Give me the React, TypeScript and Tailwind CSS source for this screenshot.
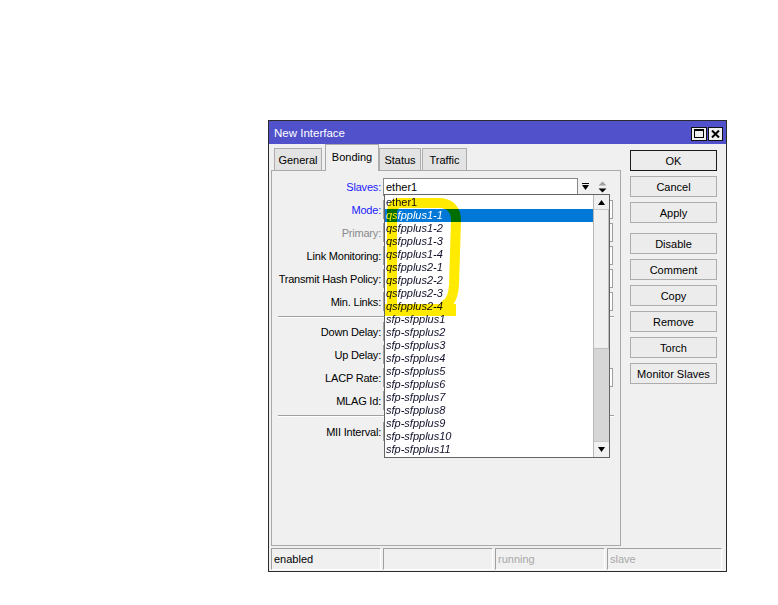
const tabs = [
  { name: "General", w: "w-[48px] ml-[3px]" },
  { name: "Bonding", w: "w-[54px] ml-[3px]", active: true },
  { name: "Status", w: "w-[42px]" },
  { name: "Traffic", w: "w-[45px] ml-[1px]" },
];

const slaves = [
  "ether1",
  "qsfpplus1-1",
  "qsfpplus1-2",
  "qsfpplus1-3",
  "qsfpplus1-4",
  "qsfpplus2-1",
  "qsfpplus2-2",
  "qsfpplus2-3",
  "qsfpplus2-4",
  "sfp-sfpplus1",
  "sfp-sfpplus2",
  "sfp-sfpplus3",
  "sfp-sfpplus4",
  "sfp-sfpplus5",
  "sfp-sfpplus6",
  "sfp-sfpplus7",
  "sfp-sfpplus8",
  "sfp-sfpplus9",
  "sfp-sfpplus10",
  "sfp-sfpplus11",
];

const actions = ["OK", "Cancel", "Apply", "Disable", "Comment", "Copy", "Remove", "Torch", "Monitor Slaves"];

type Row = { label: string; color?: string; field: string };

const topRows: Row[] = [
  { label: "Mode:", color: "text-[#1c1cff]", field: "w-[230px] bg-white" },
  { label: "Primary:", color: "text-[#8a8a8a]", field: "w-[230px] bg-[#f7f7f7]" },
  { label: "Link Monitoring:", field: "w-[230px] bg-white" },
  { label: "Transmit Hash Policy:", field: "w-[230px] bg-white" },
  { label: "Min. Links:", field: "w-[230px] bg-white" },
];

const delayRows: Row[] = [
  { label: "Down Delay:", field: "w-[180px] bg-white" },
  { label: "Up Delay:", field: "w-[180px] bg-white" },
  { label: "LACP Rate:", field: "w-[230px] bg-white" },
  { label: "MLAG Id:", field: "w-[180px] bg-white" },
];

function FormRow({ row }: { row: Row }) {
  return (
    <div className="flex h-[19px] items-center">
      <div className={`mt-[2px] w-[110px] pr-[1px] text-right tracking-[-0.2px] ${row.color ?? "text-black"}`}>
        {row.label}
      </div>
      <div className={`ml-[1px] h-[19px] border border-[#a0a0a0] ${row.field}`} />
    </div>
  );
}

function Separator() {
  return <div className="ml-[6px] mr-[6px] h-[2px] border-t border-[#a0a0a0] border-b border-b-white" />;
}

function Triangle({ up, color = "#000" }: { up?: boolean; color?: string }) {
  return (
    <svg width="9" height="5" viewBox="0 0 9 5">
      <path d={up ? "M0.5 4.5 L4.5 0.5 L8.5 4.5 Z" : "M0.5 0.5 L4.5 4.5 L8.5 0.5 Z"} fill={color} />
    </svg>
  );
}

function SlavesList() {
  return (
    <div className="absolute left-[1px] top-[17px] z-20 flex h-[264px] w-[226px] border border-[#646464] bg-white">
      <div className="flex-1 pt-[1px]">
        {slaves.map((s, i) => (
          <div
            key={s}
            className={`h-[13px] pl-[1px] leading-[13px] ${i > 0 ? "italic" : ""} ${
              i === 1 ? "bg-[#0078d7] text-white" : "text-[#10102a]"
            }`}
          >
            {s}
          </div>
        ))}
      </div>
      <div className="flex w-[16px] flex-col border-l border-[#b8b8b8] bg-[#f0f0f0]">
        <div className="flex h-[15px] items-center justify-center border-b border-[#c8c8c8]">
          <svg width="7" height="5" viewBox="0 0 7 5">
            <path d="M0 5 L3.5 0 L7 5 Z" fill="#000" />
          </svg>
        </div>
        <div className="h-[139px] border-r border-b border-[#c0c0c0] bg-[#f0f0f0]" />
        <div className="flex-1 bg-[#d6d6d6]" />
        <div className="flex h-[16px] items-center justify-center border-t border-[#c8c8c8]">
          <svg width="7" height="5" viewBox="0 0 7 5">
            <path d="M0 0 L3.5 5 L7 0 Z" fill="#000" />
          </svg>
        </div>
      </div>
      {/* marker scribble over the qsfp ports */}
      <svg className="pointer-events-none absolute left-0 top-0 mix-blend-multiply" width="226" height="264" viewBox="0 0 226 264">
        <path
          d="M60 110 Q68 106 69 90 L71 26 Q71 9 55 8 L14 8 Q7 9 7 18 L7 110"
          fill="none"
          stroke="#ffea00"
          strokeWidth="10"
          strokeLinecap="round"
          strokeLinejoin="round"
        />
        <path d="M0 115 L71 115" stroke="#ffea00" strokeWidth="12" />
      </svg>
    </div>
  );
}

export default function App() {
  return (
    <div className="min-h-[605px] bg-white pl-[268px] pt-[120px] font-['Liberation_Sans',Arial,sans-serif] text-[11px] text-black">
      <div className="flex h-[452px] w-[459px] flex-col border border-[#2b2b2b] bg-[#f0f0f0]">
        {/* title bar */}
        <div className="flex h-[23px] items-center bg-[#5151cb] pl-[5px] pr-[3px] pt-[2px]">
          <span className="text-[11.5px] text-white">New Interface</span>
          <div className="ml-auto flex gap-[1px]">
            <div className="flex h-[14px] w-[16px] items-center justify-center border border-[#111] bg-[#f0f0f0]">
              <div className="h-[9px] w-[10px] border border-black border-t-2" />
            </div>
            <div className="flex h-[14px] w-[15px] items-center justify-center border border-[#111] bg-[#f0f0f0]">
              <svg width="9" height="8" viewBox="0 0 9 8">
                <path d="M1 0.5 L8 7.5 M8 0.5 L1 7.5" stroke="#000" strokeWidth="2" />
              </svg>
            </div>
          </div>
        </div>

        {/* tabs, panel and buttons */}
        <div className="flex h-[402px]">
          <div className="ml-[2px] flex w-[350px] flex-col">
            <div className="flex h-[26px] items-end">
              {tabs.map((t) =>
                t.active ? (
                  <div
                    key={t.name}
                    className={`relative z-10 -mb-px flex h-[27px] items-center justify-center border border-b-0 border-[#a9a9a9] bg-[#f0f0f0] pb-[1px] ${t.w}`}
                  >
                    {t.name}
                  </div>
                ) : (
                  <div
                    key={t.name}
                    className={`flex h-[22px] items-center justify-center border border-b-0 border-[#adadad] bg-[#e3e3e3] pt-[2px] ${t.w}`}
                  >
                    {t.name}
                  </div>
                )
              )}
            </div>
            <div className="relative h-[376px] border border-[#a9a9a9] pt-[6px]">
              <div className="flex flex-col gap-[4px]">
                <div className="flex h-[19px] items-center">
                  <div className="mt-[2px] w-[110px] pr-[1px] text-right tracking-[-0.2px] text-[#1c1cff]">Slaves:</div>
                  <div className="relative ml-[1px] flex h-[19px] w-[230px] items-center">
                    <div className="flex h-[18px] w-[195px] items-center border border-[#8a8a8a] bg-white pl-[2px] pt-[2px]">
                      ether1
                    </div>
                    <div className="flex h-[18px] w-[15px] flex-col items-center justify-center gap-[1px]">
                      <div className="h-[1px] w-[7px] bg-black" />
                      <svg width="7" height="5" viewBox="0 0 7 5">
                        <path d="M0 0 L3.5 5 L7 0 Z" fill="#000" />
                      </svg>
                    </div>
                    <div className="ml-[5px] flex flex-col items-center gap-[2px]">
                      <Triangle up color="#a0a0a0" />
                      <Triangle />
                    </div>
                    <SlavesList />
                  </div>
                </div>
                {topRows.map((r) => (
                  <FormRow key={r.label} row={r} />
                ))}
              </div>
              <div className="mt-[5px]">
                <Separator />
              </div>
              <div className="mt-[4px] flex flex-col gap-[4px]">
                {delayRows.map((r) => (
                  <FormRow key={r.label} row={r} />
                ))}
              </div>
              <div className="mt-[5px]">
                <Separator />
              </div>
              <div className="mt-[5px]">
                <FormRow row={{ label: "MII Interval:", field: "w-[180px] bg-white" }} />
              </div>
            </div>
          </div>

          <div className="ml-[9px] flex w-[87px] flex-col pt-[6px]">
            {actions.map((a, i) => (
              <div
                key={a}
                className={`mb-[5px] flex h-[21px] items-center justify-center border bg-[#ececec] pt-[2px] ${
                  i === 0 ? "border-[#1a1a1a]" : "border-[#adadad]"
                } ${i === 3 ? "mt-[5px]" : ""}`}
              >
                {a}
              </div>
            ))}
          </div>
        </div>

        {/* status bar */}
        <div className="ml-[2px] mt-[2px] flex h-[22px] gap-[2px]">
          {[
            { t: "enabled", w: "w-[110px]", c: "text-black" },
            { t: "", w: "w-[110px]", c: "" },
            { t: "running", w: "w-[110px]", c: "text-[#a8a8a8]" },
            { t: "slave", w: "w-[115px]", c: "text-[#a8a8a8]" },
          ].map((s, i) => (
            <div
              key={i}
              className={`flex items-center border-l border-t border-[#a0a0a0] border-r border-r-white border-b border-b-white pl-[2px] ${s.w} ${s.c}`}
            >
              {s.t}
            </div>
          ))}
        </div>
      </div>
    </div>
  );
}
